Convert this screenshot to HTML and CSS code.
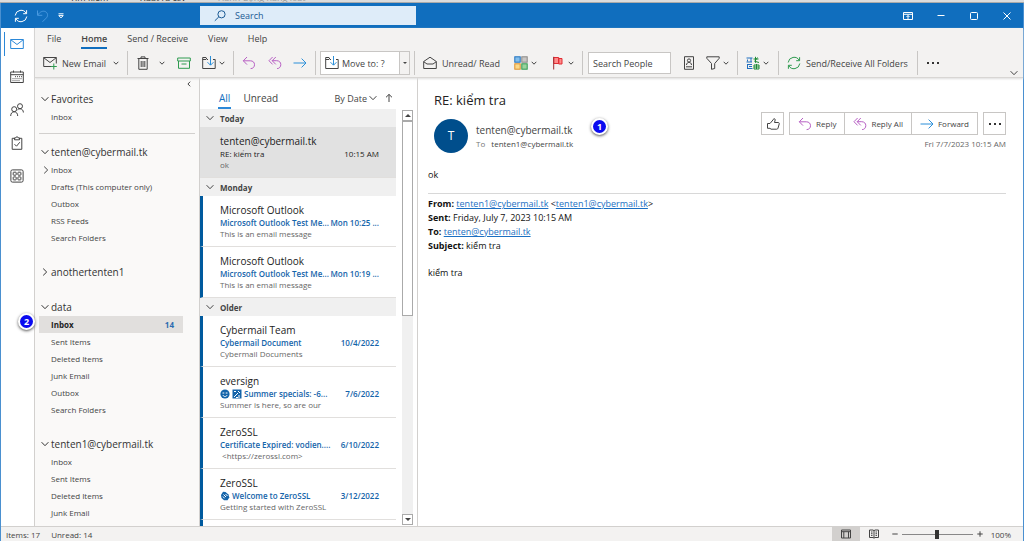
FILE: index.html
```html
<!DOCTYPE html>
<html lang="en">
<head>
    <meta charset="UTF-8">
    <meta name="viewport" content="width=device-width, initial-scale=1.0">
    <title>Inbox - data - Outlook</title>
    <link rel="stylesheet" href="styles.css">
</head>
<body>
    <!-- Shared icons -->
    <svg class="defs" aria-hidden="true">
        <symbol id="i-down" viewBox="0 0 6 6"><path d="M.7 1.8 3 4.2 5.3 1.8"/></symbol>
        <symbol id="i-chevron" viewBox="0 0 8 8"><path d="M.6 2.2 4 5.7 7.4 2.2"/></symbol>
        <symbol id="i-reply" viewBox="0 0 14 14"><path d="M5 1 1.3 4.8 5 8.6M1.3 4.8h7c2.700 0 4.200 1.600 4.200 3.900S11 12.600 8.600 12.600"/></symbol>
        <symbol id="i-replyall" viewBox="0 0 14 14"><path d="M4.600 1 1 4.700l3.600 3.700M7.800 1 4.200 4.700l3.600 3.700M4.200 4.700h4.500c2.600 0 4.100 1.700 4.100 3.900s-1.500 4-3.700 4"/></symbol>
        <symbol id="i-forward" viewBox="0 0 14 14"><path d="M.5 7h12.500M8.600 2.600 13 7l-4.400 4.400"/></symbol>
        <symbol id="i-folder" viewBox="0 0 14 14">
            <path d="M6 3.500H5L4 1.500H.7v11h12.500v-9H11M.7 3.500H4"/>
            <path class="blue" d="M8.500 0v9M5.500 6.200l3 3 3-3"/>
        </symbol>
        <symbol id="i-sync" viewBox="0 0 14 14"><path d="M1.200 6.500A5.900 5.900 0 0 1 12.300 4.500M12.800 7.500A5.900 5.900 0 0 1 1.700 9.500M12.600 1.200v3.500H9.200M1.400 12.800V9.300h3.400"/></symbol>
    </svg>

    <!-- Strip of the page behind the window -->
    <div class="behind">
        <span>Tìm kiếm</span>
        <span>Xuất ra csv</span>
        <span class="dim">Hành động hàng loạt</span>
    </div>

    <div class="window">
        <header class="title-bar">
            <div class="quick">
                <button aria-label="Send and receive"><svg class="icon"><use href="#i-sync"/></svg></button>
                <button class="off" aria-label="Undo"><svg class="icon" viewBox="0 0 14 14"><path d="M1.500 1.500v4.800h4.800M1.700 6.100C4 2.500 7 1.600 9.300 2.600c2.700 1.300 3 4.500.9 6.500L6.500 12.800"/></svg></button>
                <button aria-label="Customize toolbar"><svg class="tiny" viewBox="0 0 6 6"><path d="M.5.8h5M.8 2.600h4.400L3 4.900z"/></svg></button>
            </div>
            <label class="search">
                <svg class="icon" viewBox="0 0 14 14"><circle cx="8.500" cy="5.300" r="3.600"/><path d="M5.800 7.900 1.800 11.800"/></svg>
                <input type="text" placeholder="Search" aria-label="Search">
            </label>
            <div class="window-buttons">
                <button aria-label="Ribbon display options"><svg class="icon-sm" viewBox="0 0 10 10"><path d="M.5 1.500h9v7h-9zM.5 3.300h9M5 8V4.500M3.500 6 5 4.500 6.500 6"/></svg></button>
                <button aria-label="Minimize"><svg class="icon-sm" viewBox="0 0 10 10"><path d="M1.500 4.500h7"/></svg></button>
                <button aria-label="Maximize"><svg class="icon-sm" viewBox="0 0 10 10"><rect x="1.500" y="1.500" width="7" height="7" rx="1"/></svg></button>
                <button aria-label="Close"><svg class="icon-sm" viewBox="0 0 10 10"><path d="m1.500 1.500 7 7M8.500 1.500l-7 7"/></svg></button>
            </div>
        </header>

        <div class="body">
            <nav class="rail" aria-label="Modules">
                <button class="active" aria-label="Mail"><svg class="icon" viewBox="0 0 14 14"><path d="M.7 2.500h12.600v9H.7zM.7 2.700 7 7.500l6.300-4.800"/></svg></button>
                <button aria-label="Calendar"><svg class="icon" viewBox="0 0 14 14"><path d="M.7 2h12.600v10.500H.7zM.7 4.700h12.600M3.500.5v2M10.500.5v2"/><path class="dots" d="M5 6.700h7M2.500 8.700H12M2.500 10.700h7"/></svg></button>
                <button aria-label="People"><svg class="icon" viewBox="0 0 14 14"><circle cx="4.200" cy="6.200" r="2.500"/><circle cx="10" cy="3.200" r="2.500"/><path d="M.7 13c0-2.700 1.500-4.200 3.500-4.200s3.500 1.500 3.500 4.200M7.500 6.800C8.200 6 9 5.800 10 5.800c2 0 3.300 1.400 3.400 3.700"/></svg></button>
                <button aria-label="Tasks"><svg class="icon" viewBox="0 0 14 14"><path d="M4.500 2.300H2.200v11h9.600v-11H9.500M4.500 3.800h5V1.900H8.200C8 .3 6 .3 5.800 1.900H4.500zM4.500 8.200l2 2 3.300-4"/></svg></button>
                <button aria-label="More apps"><svg class="icon" viewBox="0 0 14 14"><rect x=".9" y=".9" width="12.200" height="12.200" rx="1.500"/><rect x="3.200" y="3.200" width="3" height="3" rx=".5"/><rect x="7.900" y="3.200" width="3" height="3" rx=".5"/><rect x="3.200" y="7.900" width="3" height="3" rx=".5"/><rect x="7.900" y="7.900" width="3" height="3" rx=".5"/></svg></button>
            </nav>

            <div class="main">
                <div class="ribbon">
                    <nav class="tabs">
                        <a href="#">File</a>
                        <a href="#" class="active">Home</a>
                        <a href="#">Send / Receive</a>
                        <a href="#">View</a>
                        <a href="#">Help</a>
                    </nav>
                    <div class="toolbar">
                        <div class="group new">
                            <button>
                                <svg class="icon" viewBox="0 0 14 14"><path d="M8.500 10.500H.7v-9h12.600v6M.7 1.700 7 6.500l6.300-4.800"/><path class="green" d="M10.800 7.500v6M7.800 10.500h6"/></svg>
                                New Email
                            </button>
                            <button aria-label="New items"><svg class="tiny"><use href="#i-down"/></svg></button>
                        </div>
                        <div class="group delete">
                            <button aria-label="Delete"><svg class="icon" viewBox="0 0 14 14"><path d="M1.500 2.500h11M5 2.300V.9h4v1.400M2.800 2.700v10.600h8.400V2.700M5.200 5v6M7 5v6M8.800 5v6"/></svg></button>
                            <button aria-label="Delete options"><svg class="tiny"><use href="#i-down"/></svg></button>
                            <button aria-label="Archive"><svg class="icon green" viewBox="0 0 14 14"><path d="M.7 2h12.600v3H.7zM1.500 5v7.300h11V5M4.500 8h5"/></svg></button>
                            <button aria-label="Move"><svg class="icon"><use href="#i-folder"/></svg><svg class="tiny"><use href="#i-down"/></svg></button>
                        </div>
                        <div class="group respond">
                            <button aria-label="Reply"><svg class="icon purple"><use href="#i-reply"/></svg></button>
                            <button aria-label="Reply all"><svg class="icon purple"><use href="#i-replyall"/></svg></button>
                            <button aria-label="Forward"><svg class="icon blue"><use href="#i-forward"/></svg></button>
                        </div>
                        <div class="group move">
                            <label class="steps">
                                <svg class="icon"><use href="#i-folder"/></svg>
                                <select aria-label="Quick steps"><option>Move to: ?</option></select>
                                <span class="arrow"></span>
                            </label>
                        </div>
                        <div class="group tags">
                            <button>
                                <svg class="icon" viewBox="0 0 14 14"><path d="M.7 5.500 7 1.200l6.300 4.300v7H.7zM.7 5.700 4 8h6l3.300-2.300"/></svg>
                                Unread/ Read
                            </button>
                            <button aria-label="Categorize">
                                <svg class="icon" viewBox="0 0 14 14"><rect class="c-blue" x=".8" y=".8" width="5.400" height="5.400"/><rect class="c-grey" x="7.800" y=".8" width="5.400" height="5.400"/><rect class="c-gold" x=".8" y="7.800" width="5.400" height="5.400"/><rect class="c-green" x="7.800" y="7.800" width="5.400" height="5.400"/></svg>
                                <svg class="tiny"><use href="#i-down"/></svg>
                            </button>
                            <button aria-label="Follow up">
                                <svg class="icon" viewBox="0 0 14 14"><path class="c-red" d="M2.700 1.500h5v6h-5zM7.700 2.500H11v5.500H7.700z"/><path class="pole" d="M2.700.8v12.700"/></svg>
                                <svg class="tiny"><use href="#i-down"/></svg>
                            </button>
                        </div>
                        <div class="group find">
                            <input type="text" placeholder="Search People" aria-label="Search People">
                            <button aria-label="Address book"><svg class="icon" viewBox="0 0 14 14"><path d="M2.500.7h9v12.600h-9zM4 10.800h6"/><circle cx="7" cy="4.500" r="1.600"/><path d="M4.500 9c0-3.500 5-3.500 5 0"/></svg></button>
                            <button aria-label="Filter email">
                                <svg class="icon" viewBox="0 0 14 14"><path d="M.8.8h12.400v1.500L8.700 7.500v5L5.500 13.300V7.500L.8 2.300z"/></svg>
                                <svg class="tiny"><use href="#i-down"/></svg>
                            </button>
                        </div>
                        <div class="group lang">
                            <button aria-label="Translate">
                                <svg class="icon" viewBox="0 0 14 14"><path class="t-blue" d="M.5 2h6M1.500 3.500v2M5 2v4M.5 6h5.500M1 8.500h5M1.500 9v3.500M1 12.500h5.500M3 10.500h3"/><path class="t-green" d="M9.500.8v6M7.500 3h5M11.500 1.500l-3 4M9.500 5.500l3.500 1M8 9h5v4H8zM10.500 8v5M8 11h5"/></svg>
                                <svg class="tiny"><use href="#i-down"/></svg>
                            </button>
                        </div>
                        <div class="group sync">
                            <button>
                                <svg class="icon green"><use href="#i-sync"/></svg>
                                Send/Receive All Folders
                            </button>
                        </div>
                        <button class="more" aria-label="More commands"><i></i><i></i><i></i></button>
                        <button class="collapse" aria-label="Collapse ribbon"><svg class="chev"><use href="#i-chevron"/></svg></button>
                    </div>
                </div>

                <div class="panes">
                    <aside class="folders">
                        <button class="hide" aria-label="Minimize folder pane"><svg class="tiny" viewBox="0 0 6 6"><path d="M4.200.7 1.900 3l2.300 2.300"/></svg></button>
                        <section class="favorites">
                            <h2><svg class="chev"><use href="#i-chevron"/></svg>Favorites</h2>
                            <a href="#">Inbox</a>
                        </section>
                        <section>
                            <h2><svg class="chev"><use href="#i-chevron"/></svg>tenten@cybermail.tk</h2>
                            <a href="#"><svg class="chev right"><use href="#i-chevron"/></svg>Inbox</a>
                            <a href="#">Drafts (This computer only)</a>
                            <a href="#">Outbox</a>
                            <a href="#">RSS Feeds</a>
                            <a href="#">Search Folders</a>
                        </section>
                        <section>
                            <h2><svg class="chev right"><use href="#i-chevron"/></svg>anothertenten1</h2>
                        </section>
                        <section>
                            <h2><svg class="chev"><use href="#i-chevron"/></svg>data</h2>
                            <a href="#" class="selected">Inbox <span class="count">14</span><span class="badge">2</span></a>
                            <a href="#">Sent Items</a>
                            <a href="#">Deleted Items</a>
                            <a href="#">Junk Email</a>
                            <a href="#">Outbox</a>
                            <a href="#">Search Folders</a>
                        </section>
                        <section>
                            <h2><svg class="chev"><use href="#i-chevron"/></svg>tenten1@cybermail.tk</h2>
                            <a href="#">Inbox</a>
                            <a href="#">Sent Items</a>
                            <a href="#">Deleted Items</a>
                            <a href="#">Junk Email</a>
                        </section>
                    </aside>

                    <section class="list">
                        <div class="list-head">
                            <button class="filter active">All</button>
                            <button class="filter">Unread</button>
                            <button class="sort">By Date <svg class="chev"><use href="#i-chevron"/></svg></button>
                            <button class="order" aria-label="Reverse order"><svg class="chev" viewBox="0 0 8 8"><path d="M4 8V.5M1 3.300 4 .4l3 2.900"/></svg></button>
                        </div>
                        <div class="list-body">
                            <div class="mails">
                                <h3><svg class="chev"><use href="#i-chevron"/></svg>Today</h3>
                                <article class="mail open">
                                    <div class="from">tenten@cybermail.tk</div>
                                    <div class="line"><span class="subject">RE: kiểm tra</span><time>10:15 AM</time></div>
                                    <div class="preview">ok</div>
                                </article>
                                <h3><svg class="chev"><use href="#i-chevron"/></svg>Monday</h3>
                                <article class="mail unread">
                                    <div class="from">Microsoft Outlook</div>
                                    <div class="line"><span class="subject">Microsoft Outlook Test Me...</span><time>Mon 10:25 ...</time></div>
                                    <div class="preview">This is an email message</div>
                                </article>
                                <article class="mail unread">
                                    <div class="from">Microsoft Outlook</div>
                                    <div class="line"><span class="subject">Microsoft Outlook Test Me...</span><time>Mon 10:19 ...</time></div>
                                    <div class="preview">This is an email message</div>
                                </article>
                                <h3><svg class="chev"><use href="#i-chevron"/></svg>Older</h3>
                                <article class="mail unread">
                                    <div class="from">Cybermail Team</div>
                                    <div class="line"><span class="subject">Cybermail Document</span><time>10/4/2022</time></div>
                                    <div class="preview">Cybermail Documents</div>
                                </article>
                                <article class="mail unread">
                                    <div class="from">eversign</div>
                                    <div class="line">
                                        <span class="subject">
                                            <svg class="emoji" viewBox="0 0 10 10"><circle cx="5" cy="5" r="4.600"/><path d="M2.500 4h1.800M5.700 4h1.800M2.700 6c1.500 2 3.100 2 4.600 0"/></svg>
                                            <svg class="emoji" viewBox="0 0 10 10"><rect x=".5" y=".5" width="9" height="9"/><path d="M2 2.500h2M6 2l2 2M2 8l4-4M7 6v3M4 8.500h2"/></svg>
                                            Summer specials: -6...
                                        </span>
                                        <time>7/6/2022</time>
                                    </div>
                                    <div class="preview">Summer is here, so are our</div>
                                </article>
                                <article class="mail unread">
                                    <div class="from">ZeroSSL</div>
                                    <div class="line"><span class="subject">Certificate Expired: vodien....</span><time>6/10/2022</time></div>
                                    <div class="preview">&nbsp;&lt;https://zerossl.com&gt;</div>
                                </article>
                                <article class="mail unread">
                                    <div class="from">ZeroSSL</div>
                                    <div class="line">
                                        <span class="subject">
                                            <svg class="emoji" viewBox="0 0 10 10"><path class="hand" d="M1 4 3 .8 5.500 1l3 2.500.8 3L7.500 9.300H4L1.500 7z"/><path d="M3.500 3.500 6 6M5.500 3l2 2M3 5.500l1.500 1.800"/></svg>
                                            Welcome to ZeroSSL
                                        </span>
                                        <time>3/12/2022</time>
                                    </div>
                                    <div class="preview">Getting started with ZeroSSL</div>
                                </article>
                                <div class="mail unread next"></div>
                            </div>
                            <div class="scrollbar">
                                <span class="up"></span>
                                <span class="thumb"></span>
                                <span class="down"></span>
                            </div>
                        </div>
                    </section>

                    <main class="reading">
                        <h1>RE: kiểm tra</h1>
                        <div class="message-head">
                            <div class="avatar">T</div>
                            <div class="people">
                                <div class="sender">tenten@cybermail.tk</div>
                                <div class="to"><span>To</span> tenten1@cybermail.tk</div>
                            </div>
                            <span class="badge">1</span>
                            <div class="actions">
                                <div class="action-row">
                                    <button class="square" aria-label="Like"><svg class="icon" viewBox="0 0 14 14"><path d="M1.500 6.500H4l3.200-3.800c.3-1.500 2-1.300 2 .2L8.500 5.500h3.700c1 0 1.200.8 1 1.500l-1.200 4.200c-.2.700-.6 1-1.300 1H5L4 11.300H1.500z"/></svg></button>
                                    <div class="action-group">
                                        <button><svg class="icon purple"><use href="#i-reply"/></svg>Reply</button>
                                        <button><svg class="icon purple"><use href="#i-replyall"/></svg>Reply All</button>
                                        <button><svg class="icon blue"><use href="#i-forward"/></svg>Forward</button>
                                    </div>
                                    <button class="square more" aria-label="More actions"><i></i><i></i><i></i></button>
                                </div>
                                <time>Fri 7/7/2023 10:15 AM</time>
                            </div>
                        </div>
                        <div class="message">
                            <p>ok</p>
                            <hr>
                            <p>
                                <b>From:</b> <a href="#">tenten1@cybermail.tk</a> &lt;<a href="#">tenten1@cybermail.tk</a>&gt;<br>
                                <b>Sent:</b> Friday, July 7, 2023 10:15 AM<br>
                                <b>To:</b> <a href="#">tenten@cybermail.tk</a><br>
                                <b>Subject:</b> kiểm tra
                            </p>
                            <p class="quoted">kiểm tra</p>
                        </div>
                    </main>
                </div>
            </div>
        </div>

        <footer class="status">
            <span class="info">Items: 17</span>
            <span class="info">Unread: 14</span>
            <div class="views">
                <button class="active" aria-label="Normal view"><svg class="icon-sm" viewBox="0 0 10 10"><path d="M.5 1h9v8h-9zM.5 2.700h9M2.800 2.700V9M7.500 2.700V9"/></svg></button>
                <button aria-label="Reading view"><svg class="icon-sm" viewBox="0 0 10 10"><path d="M.5 1H4l1 .7L6 1h3.500v7.500H6l-1 .7-1-.7H.500zM5 1.700V9M2 3h1.500M2 4.700h1.500M2 6.400h1.500M6.500 3H8M6.500 4.700H8M6.500 6.400H8"/></svg></button>
            </div>
            <div class="zoom">
                <button aria-label="Zoom out"><svg class="tiny" viewBox="0 0 6 6"><path d="M.3 3h5.400"/></svg></button>
                <input type="range" min="10" max="190" value="100" aria-label="Zoom">
                <button aria-label="Zoom in"><svg class="tiny" viewBox="0 0 6 6"><path d="M.3 3h5.400M3 .3v5.400"/></svg></button>
                <span>100%</span>
            </div>
        </footer>
    </div>
</body>
</html>
```
FILE: styles.css
```css
/* Base */
* {
    box-sizing: border-box;
}

body {
    margin: 0;
    height: 100vh;
    display: flex;
    flex-direction: column;
    overflow: hidden;
    background-color: #fff;
    color: #444;
    font-family: "Open Sans", "Noto Sans", sans-serif;
    font-size: 9px;
    line-height: 11px;
}

h1, h2, h3, p {
    margin: 0;
    font-weight: normal;
}

a {
    color: inherit;
    text-decoration: none;
}

button, input, select {
    font: inherit;
    color: inherit;
    background: none;
    border: 0;
    padding: 0;
    margin: 0;
    outline: none;
}

button {
    display: flex;
    align-items: center;
    cursor: pointer;
    white-space: nowrap;
}

/* Icons */
svg {
    fill: none;
    stroke: currentColor;
    stroke-width: 1;
    flex: none;
}

.defs {
    position: absolute;
    width: 0;
    height: 0;
}

.icon {
    width: 14px;
    height: 14px;
}

.icon-sm {
    width: 10px;
    height: 10px;
}

.chev {
    width: 8px;
    height: 8px;
}

.tiny {
    width: 6px;
    height: 6px;
}

.right {
    transform: rotate(-90deg);
}

.green {
    stroke: #2f9b50;
}

.blue {
    stroke: #2b8fd9;
}

.purple {
    stroke: #b75fc4;
}

.dots {
    stroke-dasharray: 1 1;
}

.c-blue {
    fill: #83beec;
    stroke: #1f72c0;
}

.c-grey {
    fill: #c8c6c4;
    stroke: #8a8886;
}

.c-gold {
    fill: #fbd98a;
    stroke: #e0902a;
}

.c-green {
    fill: #9ad29c;
    stroke: #2f9b50;
}

.c-red {
    fill: #ff8a8a;
    stroke: #e02c33;
}

.pole {
    stroke: #a02c33;
}

.t-blue {
    stroke: #1f6fbf;
}

.t-green {
    stroke: #1b8a35;
}

/* Page behind the window */
.behind {
    flex: none;
    height: 3px;
    padding-left: 70px;
    display: flex;
    align-items: flex-end;
    gap: 32px;
    overflow: hidden;
    background-color: #dcdcdc;
    border-bottom: 1px solid #aaa;
    color: #333;
    line-height: 9px;
}

.behind .dim {
    color: #999;
}

/* Window */
.window {
    flex: 1;
    min-height: 0;
    display: flex;
    flex-direction: column;
    border: solid #4a90d0;
    border-width: 0 1px;
}

.title-bar {
    flex: none;
    height: 25px;
    display: flex;
    align-items: center;
    background-color: #106ebe;
    color: #fff;
}

.quick {
    width: 199px;
    padding-left: 13px;
    display: flex;
    gap: 8px;
}

.quick .off {
    color: #4a9ae0;
}

.search {
    width: 216px;
    height: 19px;
    padding-left: 13px;
    display: flex;
    align-items: center;
    gap: 8px;
    background-color: #deecf9;
    color: #1b5a94;
}

.search input {
    flex: 1;
    min-width: 0;
}

input::placeholder {
    color: inherit;
    opacity: 1;
}

.window-buttons {
    margin-left: auto;
    padding-right: 11px;
    display: flex;
    gap: 23px;
}

.body {
    flex: 1;
    min-height: 0;
    display: flex;
}

/* Module rail */
.rail {
    flex: none;
    width: 34px;
    border-right: 1px solid #d2d0ce;
    display: flex;
    flex-direction: column;
}

.rail button {
    height: 33px;
    padding-left: 9px;
}

.rail .active {
    color: #2b88d8;
    height: 32px;
    padding-left: 6px;
    margin-left: 3px;
    background: linear-gradient(#2b88d8, #2b88d8) left center / 1px 24px no-repeat;
}

.main {
    flex: 1;
    min-width: 0;
    display: flex;
    flex-direction: column;
}

/* Ribbon */
.ribbon {
    flex: none;
    background-color: #f3f2f1;
    border-bottom: 1px solid #d8d6d4;
    box-shadow: 0 1px 2px #ddd;
    z-index: 1;
}

.tabs {
    display: flex;
    gap: 20px;
    padding: 4px 12px 0;
    line-height: 14px;
}

.tabs a {
    height: 17px;
}

.tabs .active {
    font-weight: 600;
    border-bottom: 2px solid #106ebe;
}

.toolbar {
    height: 28px;
    display: flex;
    align-items: center;
}

.group {
    height: 24px;
    padding: 0 8px;
    display: flex;
    align-items: center;
    justify-content: space-between;
    border-right: 1px solid #c8c6c4;
}

.group button {
    gap: 5px;
}

.new {
    width: 93px;
}

.delete {
    width: 106px;
}

.respond {
    width: 82px;
}

.move {
    width: 99px;
    padding: 0 4px;
}

.tags {
    width: 168px;
}

.find {
    width: 155px;
    padding-left: 5px;
}

.lang {
    width: 41px;
}

.sync {
    width: 139px;
}

.group .tiny {
    margin-left: -2px;
}

.steps {
    flex: 1;
    height: 24px;
    padding-left: 4px;
    display: flex;
    align-items: center;
    gap: 3px;
    background-color: #fff;
    border: 1px solid #c8c6c4;
}

.steps select {
    flex: 1;
    min-width: 0;
    appearance: none;
}

.arrow {
    align-self: stretch;
    width: 10px;
    background-color: #f3f2f1;
    border-left: 1px solid #c8c6c4;
    display: flex;
    align-items: center;
    justify-content: center;
}

.arrow::after,
.scrollbar .up::after,
.scrollbar .down::after {
    content: "";
    border: solid transparent;
    border-width: 3px 3px 0;
    border-top-color: #444;
}

.arrow::after {
    border-width: 2px 2px 0;
}

.find input {
    width: 83px;
    height: 22px;
    padding: 0 4px;
    background-color: #fff;
    border: 1px solid #c8c6c4;
}

.more {
    gap: 3px;
    padding: 0 9px;
}

.more i {
    width: 2px;
    height: 2px;
    background-color: #333;
}

.collapse {
    margin-left: auto;
    align-self: flex-end;
    padding-right: 5px;
}

.panes {
    flex: 1;
    min-height: 0;
    display: flex;
}

/* Folder pane */
.folders {
    flex: none;
    width: 165px;
    padding: 3px 4px 0;
    background-color: #faf9f8;
    border-right: 1px solid #d2d0ce;
}

.folders .hide {
    margin-left: auto;
    height: 6px;
    padding-right: 3px;
}

.folders section {
    margin-bottom: 17px;
}

.folders .favorites {
    margin-bottom: 9px;
    padding: 3px 0 8px;
    border-bottom: 1px solid #d2d0ce;
}

.folders h2 {
    display: flex;
    align-items: center;
    height: 18px;
    padding-left: 2px;
    gap: 2px;
    font-size: 10px;
    color: #333;
}

.folders a {
    position: relative;
    display: flex;
    align-items: center;
    height: 17px;
    margin-right: 12px;
    padding: 0 9px 0 12px;
    font-size: 8px;
}

.folders a .chev {
    margin-left: -9px;
    margin-right: 1px;
}

.folders .selected {
    background-color: #e1dfdd;
    font-weight: bold;
    color: #222;
}

.count {
    margin-left: auto;
    color: #2b6cb0;
}

.badge {
    width: 17px;
    height: 17px;
    border: 2px solid #fff;
    border-radius: 50%;
    background-color: #0a0af0;
    box-shadow: 0 1px 3px #555;
    color: #fff;
    font-size: 9px;
    font-weight: bold;
    line-height: 13px;
    text-align: center;
}

.folders .badge {
    position: absolute;
    left: -21px;
    top: -3px;
}

/* Message list */
.list {
    flex: none;
    width: 218px;
    display: flex;
    flex-direction: column;
    border-right: 1px solid #d2d0ce;
}

.list-head {
    flex: none;
    height: 31px;
    padding: 9px 24px 0 18px;
    display: flex;
    gap: 12px;
}

.filter {
    height: 22px;
    font-size: 10px;
}

.filter.active {
    padding: 2px 1px 0;
    color: #106ebe;
    border-bottom: 2px solid #2b88d8;
}

.sort {
    margin-left: auto;
    margin-right: -4px;
    gap: 2px;
}

.list-body {
    flex: 1;
    min-height: 0;
    display: flex;
}

.mails {
    flex: 1;
    min-width: 0;
    overflow: hidden;
}

.mails h3 {
    display: flex;
    align-items: center;
    gap: 6px;
    height: 18px;
    padding-left: 6px;
    background-color: #f0f0f0;
    font-size: 8px;
    font-weight: bold;
}

.mail {
    height: 51px;
    padding: 8px 17px 0 17px;
    border-left: 3px solid transparent;
    border-bottom: 1px solid #e1dfdd;
    font-size: 8px;
}

.mail.open {
    background-color: #e1e1e1;
}

.mail.unread {
    border-left-color: #005a9e;
}

.mail.next {
    height: 10px;
}

.from {
    font-size: 10px;
    line-height: 13px;
    color: #222;
}

.line {
    display: flex;
    justify-content: space-between;
    color: #222;
    white-space: nowrap;
}

.unread .line {
    color: #1464aa;
    font-weight: 600;
}

.subject {
    display: flex;
    align-items: center;
    gap: 2px;
}

.preview {
    color: #666;
}

.emoji {
    width: 10px;
    height: 10px;
}

.emoji circle,
.emoji rect,
.emoji .hand {
    fill: #1464aa;
    stroke: none;
}

.emoji path {
    stroke: #fff;
}

.scrollbar {
    flex: none;
    width: 11px;
    margin: 1px 4px 1px 6px;
    display: flex;
    flex-direction: column;
    background-color: #f0f0f0;
}

.scrollbar span {
    border: 1px solid #aaa;
    background-color: #fff;
    display: flex;
    align-items: center;
    justify-content: center;
}

.scrollbar .up,
.scrollbar .down {
    height: 11px;
}

.scrollbar .up::after {
    transform: rotate(180deg);
}

.scrollbar .thumb {
    height: 47%;
}

.scrollbar .down {
    margin-top: auto;
}

/* Reading pane */
.reading {
    flex: 1;
    min-width: 0;
    padding: 13px 17px 0 10px;
}

.reading h1 {
    padding-left: 6px;
    font-size: 13px;
    line-height: 18px;
    color: #222;
}

.message-head {
    position: relative;
    display: flex;
    padding-left: 6px;
}

.avatar {
    width: 34px;
    height: 34px;
    margin-top: 10px;
    border-radius: 50%;
    background-color: #004e8c;
    color: #fff;
    font-size: 12px;
    line-height: 34px;
    text-align: center;
}

.people {
    padding: 14px 0 0 8px;
}

.sender {
    font-size: 10px;
    line-height: 14px;
}

.to {
    font-size: 8px;
    line-height: 13px;
}

.to span {
    margin-right: 4px;
    color: #777;
}

.message-head .badge {
    position: absolute;
    left: 163px;
    top: 9px;
}

.actions {
    margin-left: auto;
    padding-top: 3px;
    text-align: right;
    font-size: 8px;
    color: #666;
}

.action-row {
    display: flex;
    gap: 5px;
    margin-bottom: 3px;
    color: #444;
}

.action-group {
    display: flex;
    border: 1px solid #c8c6c4;
}

.action-group button {
    height: 21px;
    padding: 0 8px;
    gap: 4px;
}

.action-group button + button {
    border-left: 1px solid #c8c6c4;
}

.square {
    width: 23px;
    height: 23px;
    padding: 0;
    justify-content: center;
    border: 1px solid #c8c6c4;
}

.message {
    padding-top: 15px;
    color: #111;
    line-height: 14px;
}

.message hr {
    margin: 11px 0 3px;
    border: 0;
    border-top: 1px solid #d8d8d8;
}

.message a {
    color: #1b6fc2;
    text-decoration: underline;
}

.quoted {
    margin-top: 13px;
}

/* Status bar */
.status {
    flex: none;
    height: 15px;
    padding-left: 5px;
    display: flex;
    align-items: center;
    background-color: #f3f2f1;
    border-top: 1px solid #d2d0ce;
    font-size: 8px;
}

.info {
    margin-right: 11px;
}

.views {
    align-self: stretch;
    margin-left: auto;
    display: flex;
}

.views button {
    width: 28px;
    justify-content: center;
}

.views .active {
    background-color: #d2d0ce;
}

.zoom {
    display: flex;
    align-items: center;
    gap: 4px;
    padding: 0 12px 0 4px;
}

.zoom span {
    margin-left: 4px;
}

.zoom input {
    width: 71px;
    height: 9px;
    appearance: none;
    background: linear-gradient(#888, #888) center / 100% 1px no-repeat;
}

.zoom input::-webkit-slider-thumb {
    appearance: none;
    width: 4px;
    height: 9px;
    background-color: #333;
}
```
